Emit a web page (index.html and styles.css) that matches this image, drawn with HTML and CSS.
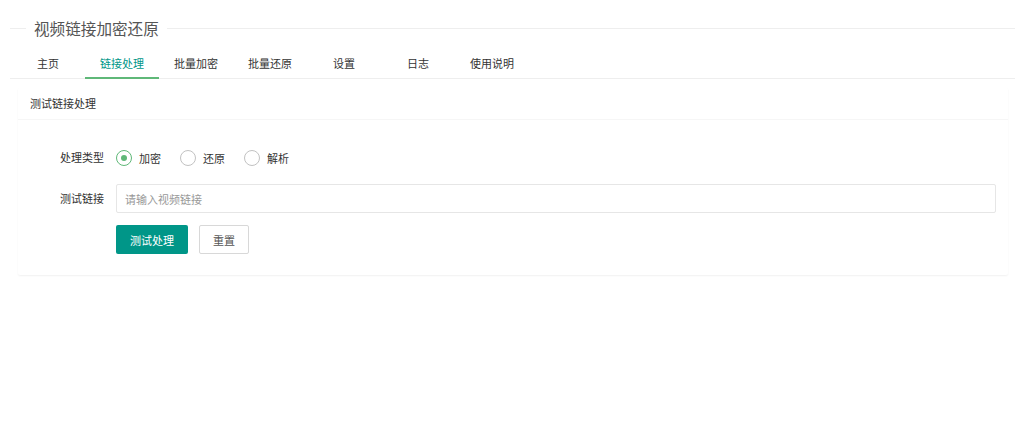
FILE: index.html
```html
<!DOCTYPE html>
<html lang="zh-CN">
<head>
    <meta charset="UTF-8">
    <meta name="viewport" content="width=device-width, initial-scale=1.0">
    <title>视频链接加密还原</title>
    <link rel="stylesheet" href="styles.css">
</head>
<body>
    <div class="page">
        <fieldset class="field-title">
            <legend>视频链接加密还原</legend>
        </fieldset>

        <div class="tab">
            <ul class="tab-title">
                <li>主页</li>
                <li class="active">链接处理</li>
                <li>批量加密</li>
                <li>批量还原</li>
                <li>设置</li>
                <li>日志</li>
                <li>使用说明</li>
            </ul>

            <div class="tab-content">
                <div class="card">
                    <div class="card-header">测试链接处理</div>
                    <div class="card-body">
                        <form class="form">
                            <div class="form-item">
                                <label class="form-label">处理类型</label>
                                <div class="input-block radios">
                                    <label class="radio checked"><i class="radio-icon"></i><span>加密</span></label>
                                    <label class="radio"><i class="radio-icon"></i><span>还原</span></label>
                                    <label class="radio"><i class="radio-icon"></i><span>解析</span></label>
                                </div>
                            </div>
                            <div class="form-item">
                                <label class="form-label">测试链接</label>
                                <div class="input-block">
                                    <input type="text" class="input" placeholder="请输入视频链接">
                                </div>
                            </div>
                            <div class="form-item">
                                <div class="input-block buttons">
                                    <button type="button" class="btn btn-main">测试处理</button>
                                    <button type="reset" class="btn btn-plain">重置</button>
                                </div>
                            </div>
                        </form>
                    </div>
                </div>
            </div>
        </div>
    </div>
</body>
</html>
```

FILE: styles.css
```css
* {
    box-sizing: border-box;
}

body {
    margin: 0;
    background-color: #fff;
    color: #333;
    font-family: "Noto Sans CJK SC", "Liberation Sans", sans-serif;
    font-size: 11px;
}

.page {
    padding: 10px 9px 10px 10px;
}

/* Title line */
.field-title {
    margin: 7px 0 9px;
    padding: 0;
    border: 0;
    border-top: 1px solid #eee;
}

.field-title legend {
    margin-left: 16px;
    padding: 0 8px;
    font-size: 15.6px;
    line-height: 22px;
    color: #555;
}

/* Tabs */
.tab-title {
    display: flex;
    height: 31px;
    margin: 0;
    padding: 0 0 0 1px;
    list-style: none;
    border-bottom: 1px solid #eee;
}

.tab-title li {
    position: relative;
    min-width: 50px;
    padding: 0 12px;
    line-height: 30px;
    text-align: center;
    cursor: pointer;
    box-sizing: content-box;
}

.tab-title li.active {
    color: #009688;
}

.tab-title li.active::after {
    content: "";
    position: absolute;
    left: 0;
    right: 0;
    bottom: -1px;
    height: 2px;
    background-color: #5FB878;
}

.tab-content {
    padding: 9px 7px 0 8px;
}

/* Card */
.card {
    background-color: #fff;
    border-radius: 2px;
    box-shadow: 0 1px 2px 0 rgba(0,0,0,0.06);
}

.card-header {
    height: 32px;
    line-height: 31px;
    padding: 0 12px;
    border-bottom: 1px solid #f6f6f6;
}

.card-body {
    padding: 23px 12px 9px;
}

/* Form */
.form-item {
    display: flex;
    height: 29px;
    margin-bottom: 12px;
}

.form-label {
    flex: none;
    width: 86px;
    padding: 0 12px;
    line-height: 29px;
    text-align: right;
}

.input-block {
    flex: 1;
    display: flex;
    align-items: center;
}

.form-item .buttons {
    margin-left: 86px;
    gap: 11px;
}

.radio {
    display: inline-flex;
    align-items: center;
    gap: 7px;
    margin-right: 19px;
    cursor: pointer;
}

.radio-icon {
    position: relative;
    width: 16px;
    height: 16px;
    border: 1px solid #c2c2c2;
    border-radius: 50%;
}

.radio.checked .radio-icon {
    border-color: #5FB878;
}

.radio.checked .radio-icon::after {
    content: "";
    position: absolute;
    top: 4px;
    left: 4px;
    width: 6px;
    height: 6px;
    border-radius: 50%;
    background-color: #5FB878;
}

.input {
    width: 100%;
    height: 29px;
    padding: 0 8px;
    border: 1px solid #e6e6e6;
    border-radius: 2px;
    font-family: inherit;
    font-size: 11px;
    color: #333;
    outline: none;
}

.input::placeholder {
    color: #999;
}

.btn {
    height: 29px;
    border-radius: 2px;
    font-family: inherit;
    font-size: 11px;
    cursor: pointer;
}

.btn-main {
    padding: 0 14px;
    border: none;
    background-color: #009688;
    color: #fff;
}

.btn-plain {
    padding: 0 13px;
    border: 1px solid #d8d8d8;
    background-color: #fff;
    color: #555;
}
```
